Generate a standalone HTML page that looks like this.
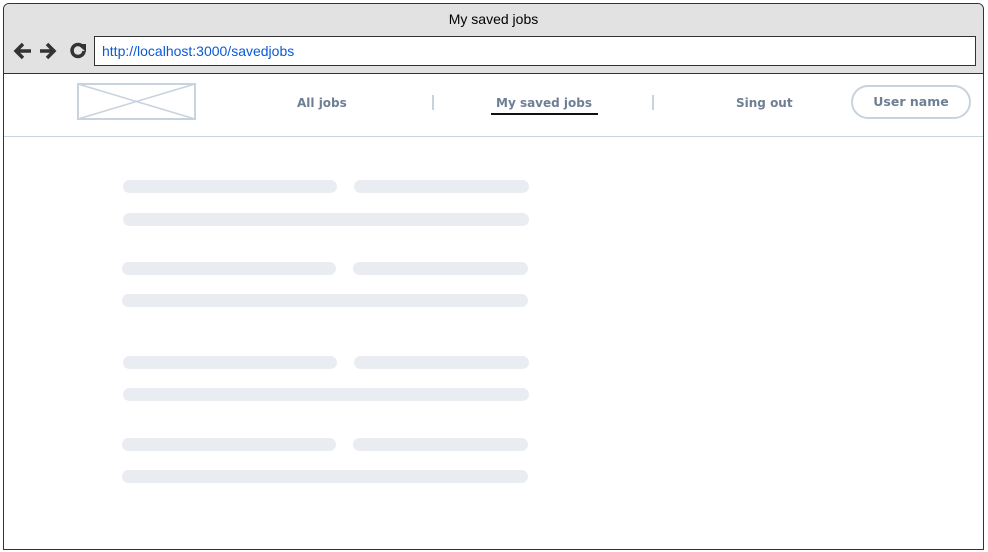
<!DOCTYPE html>
<html><head><style>
body{margin:0;width:988px;height:552px;background:#fff;position:relative;overflow:hidden;font-family:"Liberation Sans",sans-serif}
.win{position:absolute;left:3px;top:3px;width:979px;height:545px;border:1px solid #333;border-radius:6px 6px 0 0;background:#fff;overflow:hidden}
.bar{position:absolute;left:0;top:0;width:100%;height:69px;background:#e2e2e2;border-bottom:1px solid #333}
.title{position:absolute;top:7px;width:100%;text-align:center;font-size:14px;color:#000}
.url{position:absolute;left:90px;top:32px;width:882px;height:30px;border:1px solid #333;background:#fff;font-size:14px;color:#0a5ad6;line-height:29px;padding-left:7px;box-sizing:border-box}
.nav{position:absolute;font-family:"DejaVu Sans","Liberation Sans",sans-serif;font-weight:bold;font-size:12px;color:#6e7f94}
.sk{position:absolute;height:13px;border-radius:7px;background:#e9ecf0}
.sep{position:absolute;top:95px;width:2px;height:15px;background:#c8d3de}
</style></head><body>
<div class="win">
<div class="bar">
<div class="title">My saved jobs</div>
<svg style="position:absolute;left:8px;top:37px" width="80" height="20" viewBox="0 0 80 20">
<path d="M19 10H5M11 3L4 10l7 7" stroke="#333" stroke-width="3.5" fill="none"/>
<path d="M28 10h14M35 3l7 7-7 7" stroke="#333" stroke-width="3.5" fill="none"/>
<path d="M72 10a6 6 0 1 1-2-5" stroke="#333" stroke-width="3.5" fill="none"/>
<path d="M65 3l9 0 0 8z" fill="#333"/>
</svg>
<div class="url">http://localhost:3000/savedjobs</div>
</div>
</div>
<div style="position:absolute;left:4px;top:136px;width:979px;height:1px;background:#c8d6e0"></div>
<svg style="position:absolute;left:77px;top:83px" width="120" height="38"><rect x="1" y="1" width="117" height="35" fill="none" stroke="#c8d3de" stroke-width="2"/><path d="M1 1L118 36M118 1L1 36" stroke="#c8d3de" stroke-width="1.5"/></svg>
<div class="nav" style="left:297px;top:96px">All jobs</div>
<div class="sep" style="left:432px"></div>
<div class="nav" style="left:496px;top:96px">My saved jobs</div>
<div style="position:absolute;left:491px;top:113px;width:107px;height:2px;background:#111"></div>
<div class="sep" style="left:652px"></div>
<div class="nav" style="left:736px;top:96px">Sing out</div>
<div class="nav" style="left:851px;top:85px;width:116px;height:30px;border:2px solid #c8d3de;border-radius:17px;text-align:center;line-height:30px;font-size:12.5px">User name</div>
<div class="sk" style="left:123px;top:180px;width:214px"></div><div class="sk" style="left:354px;top:180px;width:175px"></div><div class="sk" style="left:123px;top:213px;width:406px"></div>
<div class="sk" style="left:122px;top:262px;width:214px"></div><div class="sk" style="left:353px;top:262px;width:175px"></div><div class="sk" style="left:122px;top:294px;width:406px"></div>
<div class="sk" style="left:123px;top:356px;width:214px"></div><div class="sk" style="left:354px;top:356px;width:175px"></div><div class="sk" style="left:123px;top:388px;width:406px"></div>
<div class="sk" style="left:122px;top:438px;width:214px"></div><div class="sk" style="left:353px;top:438px;width:175px"></div><div class="sk" style="left:122px;top:470px;width:406px"></div>
</body></html>
